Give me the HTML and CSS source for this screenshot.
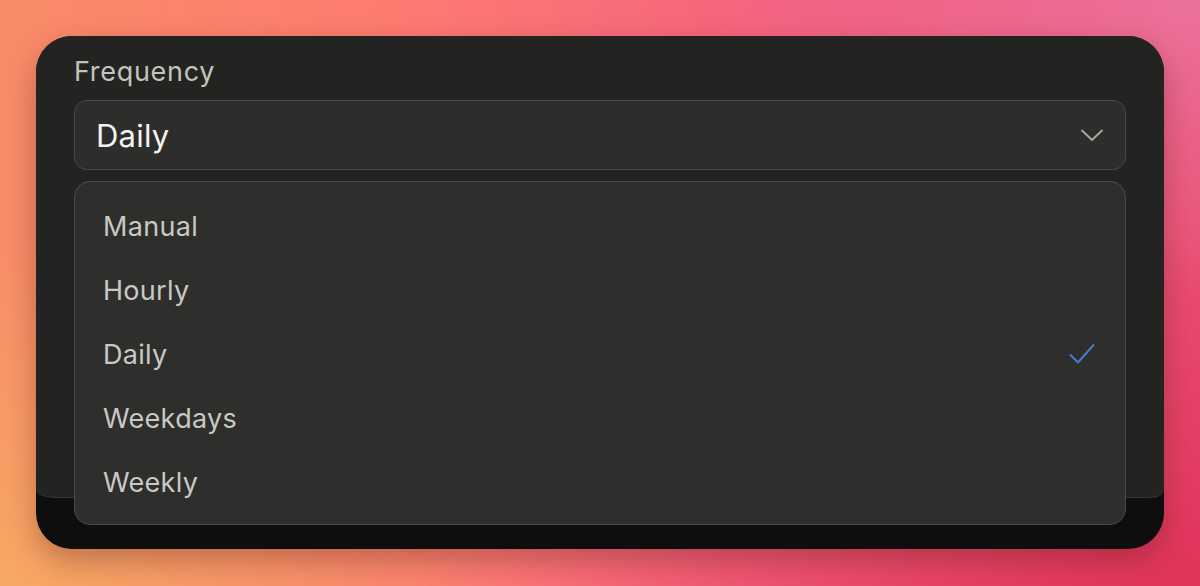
FILE: index.html
```html
<!DOCTYPE html>
<html lang="en">
<head>
<meta charset="utf-8">
<title>Frequency</title>
<link rel="stylesheet" href="styles.css">
</head>
<body>
<div class="window">
  <div class="card">
    <div class="label">Frequency</div>
    <div class="select">
      <span class="select-value">Daily</span>
      <svg class="chevron" width="22" height="13" viewBox="0 0 22 13"><path d="M1 1.5 L11 11 L21 1.5" fill="none" stroke="#a9a9a6" stroke-width="1.8" stroke-linecap="round" stroke-linejoin="round"/></svg>
    </div>
  </div>
  <ul class="menu">
    <li class="item">Manual</li>
    <li class="item">Hourly</li>
    <li class="item selected"><span>Daily</span>
      <svg class="check" width="26" height="22" viewBox="0 0 26 22"><path d="M1.5 12 L9 19.5 L24.5 2" fill="none" stroke="#3f82c9" stroke-width="2" stroke-linecap="round" stroke-linejoin="round"/></svg>
    </li>
    <li class="item">Weekdays</li>
    <li class="item">Weekly</li>
  </ul>
</div>
</body>
</html>
```
FILE: styles.css
```css
* { box-sizing: border-box; }
html, body { height: 100%; }
body {
  margin: 0;
  padding: 36px;
  font-family: "Inter", "Noto Sans", sans-serif;
  background:
    radial-gradient(ellipse 55% 60% at 100% 100%, rgba(224, 48, 88, 0.9), rgba(224, 48, 88, 0) 100%),
    radial-gradient(ellipse 45% 60% at 0% 100%, rgba(247, 170, 100, 0.95), rgba(247, 170, 100, 0) 100%),
    radial-gradient(ellipse 40% 50% at 100% 0%, rgba(236, 118, 160, 0.9), rgba(236, 118, 160, 0) 100%),
    linear-gradient(90deg, #f98c68 0%, #fd7a72 35%, #f5627f 65%, #ea4f72 100%);
  overflow: hidden;
}
.window {
  position: relative;
  height: 513px;
  border-radius: 36px;
  background: #0e0e0e;
  overflow: hidden;
  box-shadow: 0 12px 30px rgba(90, 30, 20, 0.35);
}
.card {
  height: 462px;
  background: #232322;
  border-bottom: 1px solid #353534;
  border-radius: 0 0 14px 22px / 0 0 8px 8px;
  padding: 20px 38px 0;
}
.label {
  font-size: 27px;
  line-height: 32px;
  color: #c3c3be;
  letter-spacing: 0.7px;
}
.select {
  margin-top: 12px;
  height: 70px;
  border: 1px solid #484847;
  border-radius: 13px;
  background: #2d2d2c;
  display: flex;
  align-items: center;
  justify-content: space-between;
  padding: 0 22px 0 21px;
}
.select-value {
  font-size: 31px;
  color: #f3f3f1;
  letter-spacing: 0.2px;
}
.chevron { display: block; margin-top: 1px; }
.menu {
  position: absolute;
  top: 145px;
  left: 38px;
  right: 38px;
  height: 344px;
  margin: 0;
  padding: 12px 0;
  list-style: none;
  background: #2e2e2d;
  border: 1px solid #4a4a49;
  border-radius: 16px;
}
.item {
  height: 64px;
  display: flex;
  align-items: center;
  justify-content: space-between;
  padding: 0 30px 0 28px;
  font-size: 27px;
  color: #c9c9c4;
  letter-spacing: 0.3px;
}
.check { display: block; }
```
